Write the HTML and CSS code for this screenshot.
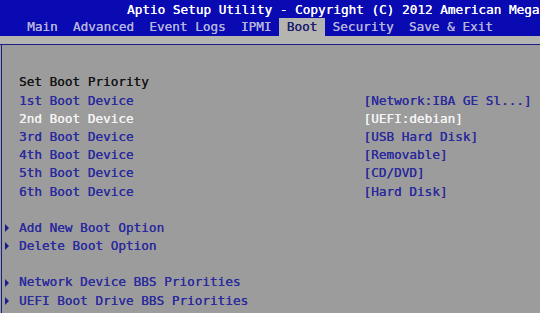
FILE: index.html
```html
<!DOCTYPE html>
<html>
<head>
<meta charset="utf-8">
<link rel="stylesheet" href="styles.css">
</head>
<body>
<div class="screen">
  <header class="header">
    <div class="title">Aptio Setup Utility - Copyright (C) 2012 American Mega</div>
    <nav class="menu">
      <span class="tab">Main</span>
      <span class="tab">Advanced</span>
      <span class="tab">Event Logs</span>
      <span class="tab">IPMI</span>
      <span class="tab active">Boot</span>
      <span class="tab">Security</span>
      <span class="tab">Save &amp; Exit</span>
    </nav>
  </header>
  <div class="band"></div>
  <main class="panel">
    <div class="row"><span class="slot"></span><span class="label plain">Set Boot Priority</span></div>
    <div class="row"><span class="slot"></span><span class="label">1st Boot Device</span><span class="value">[Network:IBA GE Sl...]</span></div>
    <div class="row sel"><span class="slot"></span><span class="label">2nd Boot Device</span><span class="value">[UEFI:debian]</span></div>
    <div class="row"><span class="slot"></span><span class="label">3rd Boot Device</span><span class="value">[USB Hard Disk]</span></div>
    <div class="row"><span class="slot"></span><span class="label">4th Boot Device</span><span class="value">[Removable]</span></div>
    <div class="row"><span class="slot"></span><span class="label">5th Boot Device</span><span class="value">[CD/DVD]</span></div>
    <div class="row"><span class="slot"></span><span class="label">6th Boot Device</span><span class="value">[Hard Disk]</span></div>
    <div class="row"></div>
    <div class="row"><span class="slot"><i class="arrow"></i></span><span class="label">Add New Boot Option</span></div>
    <div class="row"><span class="slot"><i class="arrow"></i></span><span class="label">Delete Boot Option</span></div>
    <div class="row"></div>
    <div class="row"><span class="slot"><i class="arrow"></i></span><span class="label">Network Device BBS Priorities</span></div>
    <div class="row"><span class="slot"><i class="arrow"></i></span><span class="label">UEFI Boot Drive BBS Priorities</span></div>
  </main>
</div>
</body>
</html>
```
FILE: styles.css
```css
html, body {
  margin: 0;
  padding: 0;
  background: #9c9c9c;
}
body {
  width: 540px;
  height: 313px;
  overflow: hidden;
  font-family: "DejaVu Sans Mono", "Liberation Mono", monospace;
  font-size: 12.7px;
}
.screen {
  display: flex;
  flex-direction: column;
  height: 313px;
}
.header {
  background: #0a0ab2;
  height: 36.4px;
  display: flex;
  flex-direction: column;
}
.title {
  height: 18.2px;
  line-height: 19px;
  padding-left: 127px;
  color: #ffffff;
  white-space: nowrap;
  text-shadow: 0.15px 0 0 #ffffff;
}
.menu {
  height: 18.2px;
  display: flex;
  padding-left: 19.5px;
  white-space: pre;
}
.tab {
  line-height: 18.2px;
  padding: 0 7.64px;
  color: #b4b4dc;
  text-shadow: 0.15px 0 0 currentColor;
}
.tab.active {
  background: #b4b4b0;
  color: #1c1c6c;
}
.band {
  height: 7.6px;
  background: #b4b4b0;
  border-bottom: 1px solid #1e1e88;
}
.panel {
  flex: 1;
  border-left: 1.5px solid #1e1e88;
  margin-left: 1px;
  padding-top: 28.4px;
  padding-left: 2px;
  background: #9c9c9c;
}
.row {
  height: 18.2px;
  line-height: 18.2px;
  display: flex;
  align-items: center;
  white-space: pre;
  color: #2a2a9c;
  text-shadow: 0.15px 0 0 currentColor;
}
.slot {
  width: 15px;
  display: flex;
  align-items: center;
}
.arrow {
  display: block;
  width: 0;
  height: 0;
  border-left: 4.5px solid #1c1c8c;
  border-top: 4px solid transparent;
  border-bottom: 4px solid transparent;
  margin-left: 1px;
}
.label {
  width: 344.5px;
}
.label.plain {
  color: #141414;
}
.row.sel {
  color: #f4f4f4;
}
```
